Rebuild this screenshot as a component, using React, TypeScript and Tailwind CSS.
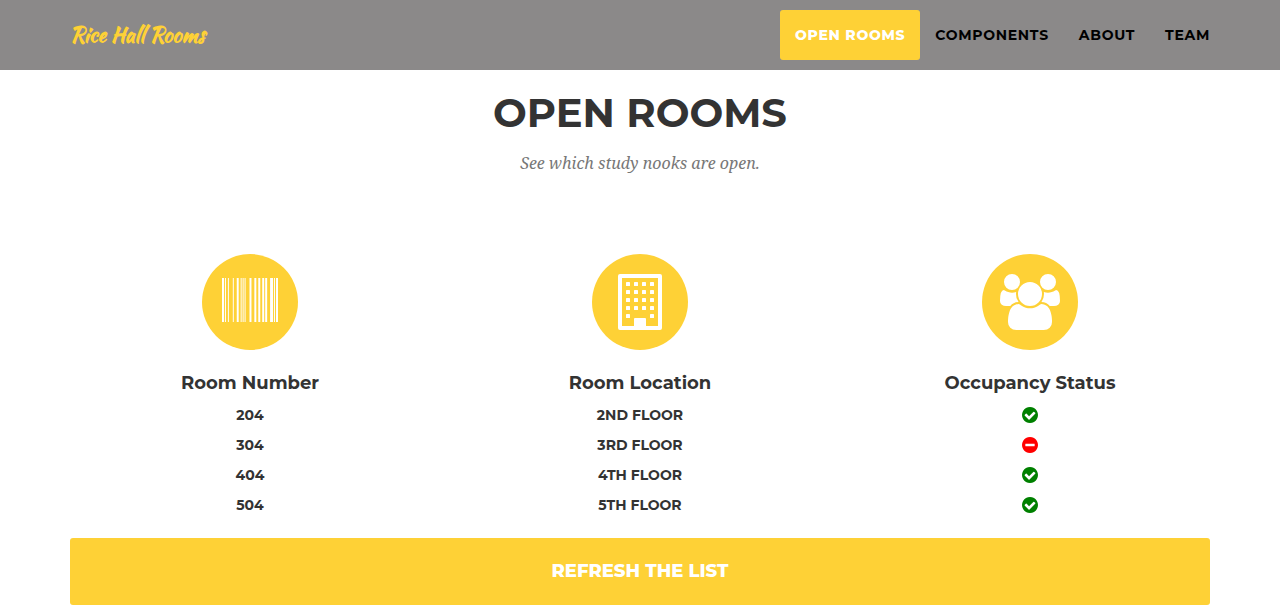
import type { ReactNode } from "react";

const BARS: [number, number][] = [
  [0, 63], [94, 32], [189, 31], [346, 31], [472, 62], [597, 31], [660, 31], [723, 31],
  [880, 63], [1035, 63], [1161, 63], [1287, 63], [1382, 63], [1539, 94], [1665, 31], [1728, 64],
];

function BarcodeIcon() {
  return (
    <svg aria-hidden="true" viewBox="0 0 1792 1536" className="h-12 w-14 fill-white">
      {BARS.map(([x, w]) => (
        <rect key={x} x={x} y="0" width={w} height="1408" />
      ))}
    </svg>
  );
}

function BuildingIcon() {
  const windows = [0, 1, 2, 3, 4].flatMap((row) =>
    [0, 1, 2, 3].filter((col) => row < 4 || col === 0 || col === 3).map((col) => [8 + col * 8, 8 + row * 8]),
  );
  return (
    <svg aria-hidden="true" viewBox="0 0 44 56" className="h-14 w-11 fill-white">
      <path
        fillRule="evenodd"
        d="M2 0H42Q44 0 44 2V54Q44 56 42 56H2Q0 56 0 54V2Q0 0 2 0ZM4 4V52H16V45Q16 44 17 44H27Q28 44 28 45V52H40V4Z"
      />
      {windows.map(([x, y]) => (
        <rect key={`${x}-${y}`} x={x} y={y} width="4" height="4" rx="0.6" />
      ))}
    </svg>
  );
}

function PeopleIcon() {
  return (
    <svg aria-hidden="true" viewBox="64 0 1920 1792" className="h-14 w-15 fill-white">
      <path d="M657 896q-162 5-265 128h-134q-82 0-138-40.5t-56-118.5q0-353 124-353 6 0 43.5 21t97.5 42.5 119 21.5q67 0 133-23-5 37-5 66 0 159 81 256zm1071 637q0 120-73 189.5t-194 69.5h-874q-121 0-194-69.5t-73-189.5q0-53 3.5-103.5t14-109 26.5-108.5 43-97.5 62-81 85.5-53.5 111.5-20q10 0 43 21.5t73 48 107 48 135 21.5 135-21.5 107-48 73-48 43-21.5q61 0 111.5 20t85.5 53.5 62 81 43 97.5 26.5 108.5 14 109 3.5 103.5zm-1024-1277q0 106-75 181t-181 75-181-75-75-181 75-181 181-75 181 75 75 181zm704 384q0 159-112.5 271.5t-271.5 112.5-271.5-112.5-112.5-271.5 112.5-271.5 271.5-112.5 271.5 112.5 112.5 271.5zm576 225q0 78-56 118.5t-138 40.5h-134q-103-123-265-128 81-97 81-256 0-29-5-66 66 23 133 23 59 0 119-21.5t97.5-42.5 43.5-21q124 0 124 353zm-128-609q0 106-75 181t-181 75-181-75-75-181 75-181 181-75 181 75 75 181z" />
    </svg>
  );
}

function StatusIcon({ open }: { open: boolean }) {
  return open ? (
    <svg role="img" aria-label="Open" viewBox="128 128 1536 1536" className="size-4 fill-[#008000]">
      <path d="M1412 734q0-28-18-46l-91-90q-19-19-45-19t-45 19l-408 407-226-226q-19-19-45-19t-45 19l-91 90q-18 18-18 46 0 27 18 45l362 362q19 19 45 19 27 0 46-19l543-543q18-18 18-45zm252 162q0 209-103 385.5t-279.5 279.5-385.5 103-385.5-103-279.5-279.5-103-385.5 103-385.5 279.5-279.5 385.5-103 385.5 103 279.5 279.5 103 385.5z" />
    </svg>
  ) : (
    <svg role="img" aria-label="Occupied" viewBox="128 128 1536 1536" className="size-4 fill-[#ff0000]">
      <path d="M1344 960v-128q0-26-19-45t-45-19h-768q-26 0-45 19t-19 45v128q0 26 19 45t45 19h768q26 0 45-19t19-45zm320-64q0 209-103 385.5t-279.5 279.5-385.5 103-385.5-103-279.5-279.5-103-385.5 103-385.5 279.5-279.5 385.5-103 385.5 103 279.5 279.5 103 385.5z" />
    </svg>
  );
}

const rooms = [
  { number: "204", location: "2ND FLOOR", open: true },
  { number: "304", location: "3RD FLOOR", open: false },
  { number: "404", location: "4TH FLOOR", open: true },
  { number: "504", location: "5TH FLOOR", open: true },
];

function ColumnHead({ icon, children }: { icon: ReactNode; children: string }) {
  return (
    <th scope="col" className="p-0 pb-1 text-lg leading-[26px] font-bold">
      <span className="mx-auto mb-5 flex size-24 items-center justify-center rounded-full bg-[#fed136]">{icon}</span>
      {children}
    </th>
  );
}

export default function App() {
  return (
    <div className="bg-white font-[Montserrat,Inter,'Open_Sans',sans-serif] text-[#333333]">
      <header className="bg-[#8b8989]">
        <div className="mx-auto flex max-w-[1170px] items-center justify-between px-[15px] py-2.5">
          <a href="#top" className="font-['Kaushan_Script','Brush_Script_MT',cursive] text-[21px] leading-8 font-bold text-[#fed136]">
            Rice Hall Rooms
          </a>
          <nav className="flex text-sm leading-5 font-bold tracking-wider text-black">
            <a href="#rooms" aria-current="page" className="rounded-[3px] bg-[#fed136] p-[15px] font-extrabold text-white">OPEN ROOMS</a>
            <a href="#components" className="p-[15px]">COMPONENTS</a>
            <a href="#about" className="p-[15px]">ABOUT</a>
            <a href="#team" className="py-[15px] pl-[15px]">TEAM</a>
          </nav>
        </div>
      </header>
      <main id="rooms" className="mx-auto max-w-[1170px] pt-5">
        <div className="text-center">
          <h1 className="text-[40px] leading-[46px] font-bold">OPEN ROOMS</h1>
          <p className="mt-[15px] font-['Droid_Serif','Noto_Serif','Liberation_Serif',serif] text-base leading-6 text-[#777777] italic">
            See which study nooks are open.
          </p>
        </div>
        <table className="mt-[79px] w-full table-fixed text-center">
          <thead>
            <tr>
              <ColumnHead icon={<BarcodeIcon />}>Room Number</ColumnHead>
              <ColumnHead icon={<BuildingIcon />}>Room Location</ColumnHead>
              <ColumnHead icon={<PeopleIcon />}>Occupancy Status</ColumnHead>
            </tr>
          </thead>
          <tbody className="text-sm font-bold">
            {rooms.map((room) => (
              <tr key={room.number} className="h-[30px]">
                <td>{room.number}</td>
                <td>{room.location}</td>
                <td>
                  <span className="flex justify-center">
                    <StatusIcon open={room.open} />
                  </span>
                </td>
              </tr>
            ))}
          </tbody>
        </table>
        <div className="mt-[18px] px-[15px] pb-1">
          <button type="button" className="w-full rounded-[3px] bg-[#fed136] py-5 text-lg leading-[27px] font-extrabold text-white">
            REFRESH THE LIST
          </button>
        </div>
      </main>
    </div>
  );
}
